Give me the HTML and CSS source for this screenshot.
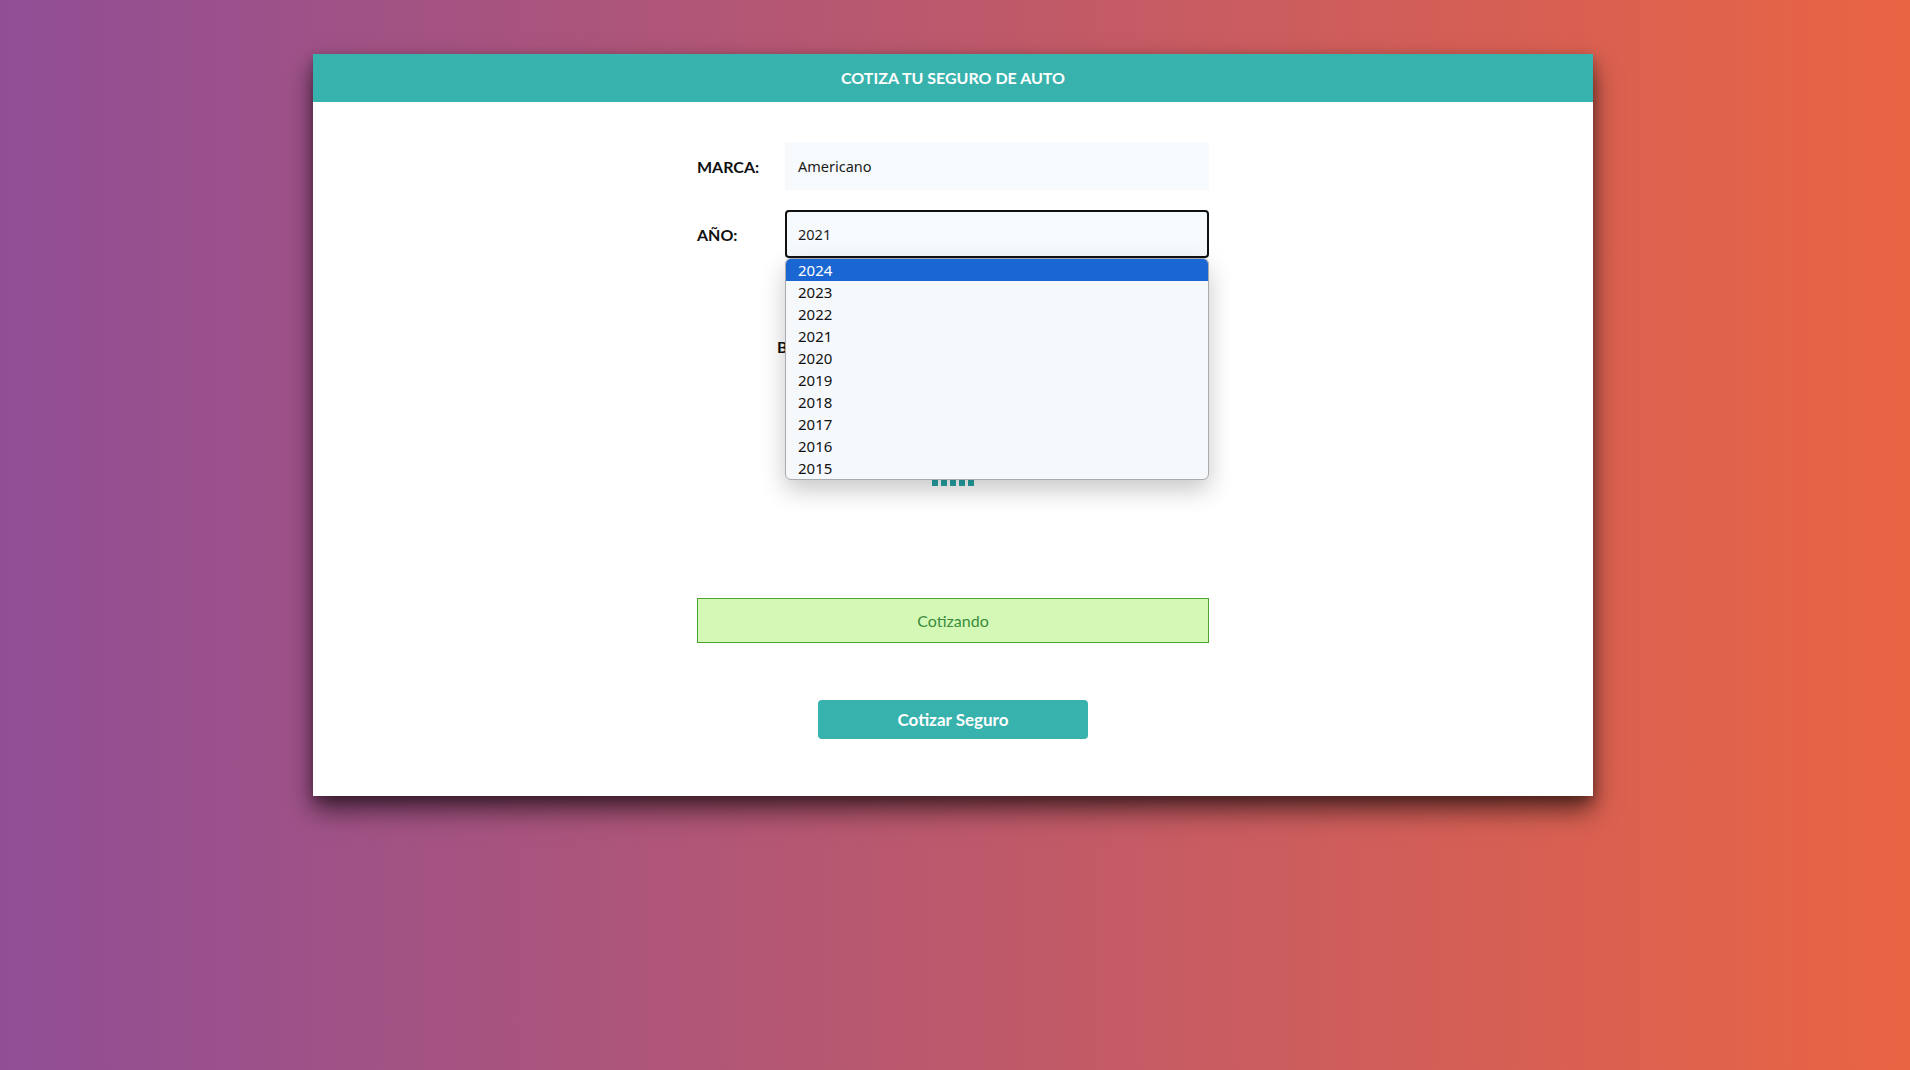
FILE: index.html
```html
<!DOCTYPE html>
<html lang="es">
<head>
<meta charset="utf-8">
<title>Cotizador</title>
<link rel="stylesheet" href="styles.css">
</head>
<body>
<div class="card">
  <header class="card-header">Cotiza tu seguro de auto</header>
  <div class="card-body">
    <form class="form">
      <div class="row">
        <label class="label">MARCA:</label>
        <div class="field">Americano</div>
      </div>
      <div class="row row-select">
        <label class="label">AÑO:</label>
        <div class="field field-focus">2021</div>
        <ul class="dropdown">
          <li class="opt opt-active">2024</li>
          <li class="opt">2023</li>
          <li class="opt">2022</li>
          <li class="opt">2021</li>
          <li class="opt">2020</li>
          <li class="opt">2019</li>
          <li class="opt">2018</li>
          <li class="opt">2017</li>
          <li class="opt">2016</li>
          <li class="opt">2015</li>
        </ul>
      </div>
      <div class="plan"><span class="plan-text">Básico</span></div>
      <div class="spinner">
        <span></span><span></span><span></span><span></span><span></span>
      </div>
      <div class="alert">Cotizando</div>
      <div class="actions">
        <button type="button" class="btn">Cotizar Seguro</button>
      </div>
    </form>
  </div>
</div>
</body>
</html>
```

FILE: styles.css
```css
html, body {
  margin: 0;
  padding: 0;
}
body {
  min-height: 1070px;
  background: linear-gradient(to right, #904e95, #e96443);
  font-family: Lato, "Noto Sans", sans-serif;
  color: #1a202c;
  overflow: hidden;
}
.card {
  width: 1280px;
  margin: 54px 0 0 calc(50% - 642px);
  background: #fff;
  box-shadow: 0 14px 24px rgba(0, 0, 0, 0.58), 0 4px 10px rgba(0, 0, 0, 0.25);
}
.card-header {
  height: 48px;
  line-height: 48px;
  background: #38b2ac;
  color: #fff;
  text-align: center;
  text-transform: uppercase;
  font-weight: 700;
  font-size: 16px;
}
.card-body {
  padding: 40px 0 57px;
}
.form {
  width: 512px;
  margin: 0 auto;
  display: flex;
  flex-direction: column;
}
.row {
  display: flex;
  align-items: center;
  height: 48px;
  margin-bottom: 20px;
}
.row-select {
  position: relative;
  margin-bottom: 0;
}
.label {
  width: 88px;
  flex: none;
  font-weight: 700;
  font-size: 16px;
  color: #111;
}
.field {
  flex: 1;
  height: 48px;
  box-sizing: border-box;
  padding: 0 13px;
  display: flex;
  align-items: center;
  background: #f7fafc;
  font-family: "Noto Sans", "Open Sans", sans-serif;
  font-size: 14.5px;
  color: #1a1a1a;
}
.field-focus {
  border: 2px solid #111;
  border-radius: 4px;
  padding: 0 11px;
}
.dropdown {
  position: absolute;
  left: 88px;
  right: 0;
  top: 48px;
  margin: 0;
  padding: 0;
  list-style: none;
  background: #f6f9fc;
  border: 1px solid #a9abae;
  border-radius: 6px;
  overflow: hidden;
  box-shadow: 0 10px 24px rgba(0, 0, 0, 0.22);
  z-index: 5;
}
.opt {
  height: 22px;
  line-height: 22px;
  padding-left: 12px;
  font-family: "Noto Sans", "Open Sans", sans-serif;
  font-size: 15px;
  color: #111;
}
.opt-active {
  background: #1a66d2;
  color: #fff;
}
.plan {
  margin-top: 77px;
  height: 24px;
  line-height: 24px;
  padding-left: 80px;
  font-weight: 700;
  font-size: 16px;
  color: #111;
}
.plan-text {
  display: inline-block;
  width: 9px;
  overflow: hidden;
  vertical-align: top;
  white-space: nowrap;
}
.spinner {
  margin: 87px auto 0;
  height: 40px;
  display: flex;
  gap: 2.8px;
  justify-content: center;
}
.spinner span {
  width: 6px;
  height: 40px;
  background: #26a2a4;
}
.alert {
  margin-top: 112px;
  height: 45px;
  box-sizing: border-box;
  border: 1px solid #4ea332;
  background: #d4f9b7;
  color: #3b8b3b;
  display: flex;
  align-items: center;
  justify-content: center;
  font-size: 16px;
}
.actions {
  margin-top: 57px;
  display: flex;
  justify-content: center;
}
.btn {
  width: 270px;
  height: 39px;
  border: 0;
  border-radius: 4px;
  background: #38b2ac;
  color: #fff;
  font-family: Lato, "Noto Sans", sans-serif;
  font-weight: 700;
  font-size: 17px;
  padding: 0;
}
```
